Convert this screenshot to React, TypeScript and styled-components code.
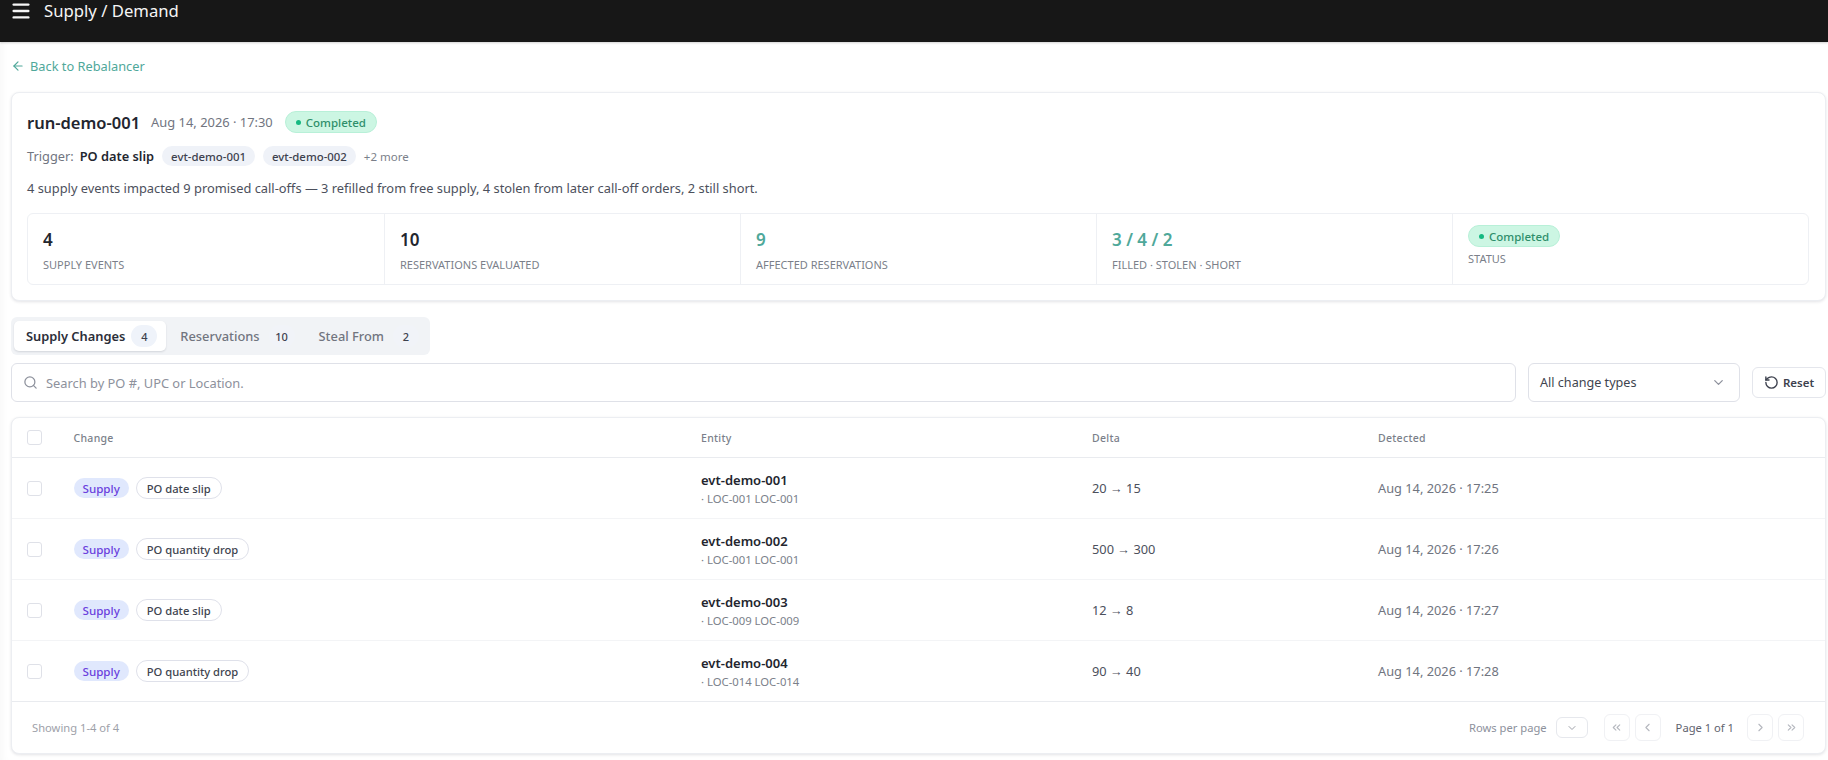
import styled, { createGlobalStyle } from "styled-components";
import {
  ArrowLeft,
  ChevronDown,
  ChevronLeft,
  ChevronRight,
  ChevronsLeft,
  ChevronsRight,
  Menu,
  RotateCcw,
  Search,
} from "lucide-react";

const GlobalStyle = createGlobalStyle`
  * { box-sizing: border-box; }
  html, body { margin: 0; padding: 0; background: #fff; }
  body {
    font-family: "Noto Sans", "Open Sans", sans-serif;
    color: #23262f;
    overflow: hidden;
  }
`;

const TopBar = styled.header`
  display: flex;
  align-items: flex-start;
  gap: 12px;
  height: 42px;
  padding: 0 0 0 10px;
  background: #171717;
  color: #f5f5f5;
  box-shadow: 0 1px 2px rgba(0, 0, 0, 0.18);
`;

const TopTitle = styled.div`
  font-size: 16.7px;
  line-height: 22px;
`;

const Main = styled.main`
  padding: 15px 2px 0 11px;
  box-shadow: inset 8px 0 8px -6px rgba(0, 0, 0, 0.035);
  height: 718px;
`;

const BackLink = styled.a`
  display: flex;
  align-items: center;
  gap: 5px;
  height: 18px;
  font-size: 12.8px;
  color: #4fa89a;
`;

const Card = styled.section`
  margin-top: 17px;
  padding: 17px 16px 15px 15px;
  border: 1px solid #eceef2;
  border-radius: 8px;
  background: #fff;
  box-shadow: 0 1px 3px rgba(30, 35, 60, 0.12);
`;

const TitleRow = styled.div`
  display: flex;
  align-items: center;
  height: 24px;
`;

const RunName = styled.h1`
  margin: 0 11px 0 0;
  font-size: 16.5px;
  font-weight: 600;
  color: #23262f;
`;

const RunDate = styled.span`
  margin-right: 12px;
  font-size: 12.9px;
  color: #71757f;
`;

const StatusPill = styled.span`
  display: inline-flex;
  align-items: center;
  gap: 5px;
  height: 22px;
  padding: 0 10px;
  border: 1px solid #b8f0d8;
  border-radius: 11px;
  background: #ccf6e3;
  color: #2f8f6b;
  font-size: 11.5px;
  font-weight: 500;
`;

const StatusDot = styled.i`
  width: 5px;
  height: 5px;
  border-radius: 50%;
  background: #15b981;
`;

const TriggerRow = styled.div`
  display: flex;
  align-items: center;
  height: 22px;
  margin-top: 11px;
  font-size: 12.8px;
`;

const TriggerLabel = styled.span`
  margin-right: 6px;
  color: #71757f;
`;

const TriggerValue = styled.strong`
  margin-right: 8px;
  font-weight: 600;
  color: #23262f;
`;

const EventChip = styled.span`
  display: inline-flex;
  align-items: center;
  height: 20px;
  margin-right: 8px;
  padding: 0 9px;
  border-radius: 10px;
  background: #eff2f8;
  color: #3d414e;
  font-size: 11.4px;
  font-weight: 500;
`;

const MoreLink = styled.span`
  color: #7b7f8a;
  font-size: 11.5px;
`;

const Summary = styled.p`
  margin: 11px 0 0;
  font-size: 12.85px;
  line-height: 20px;
  color: #4c505c;
`;

const StatGrid = styled.div`
  display: grid;
  grid-template-columns: repeat(5, 1fr);
  height: 72px;
  margin-top: 15px;
  border: 1px solid #eef0f4;
  border-radius: 6px;
`;

const StatCell = styled.div`
  display: flex;
  flex-direction: column;
  padding: 14px 16px 0 15px;
  border-left: 1px solid #eef0f4;

  &:first-child {
    border-left: 0;
  }
`;

const StatusCell = styled(StatCell)`
  padding-top: 11px;
  align-items: flex-start;
`;

const StatValue = styled.div<{ $accent?: boolean }>`
  height: 24px;
  font-size: 17px;
  line-height: 24px;
  font-weight: 600;
  color: ${({ $accent }) => ($accent ? "#4fa89a" : "#23262f")};
`;

const StatLabel = styled.div`
  margin-top: 5px;
  font-size: 11px;
  line-height: 16px;
  color: #7b7f8a;
`;

const StatusLabel = styled(StatLabel)`
  margin-top: 4px;
`;

const TabList = styled.div`
  display: inline-flex;
  height: 38px;
  margin-top: 16px;
  padding: 4px 1px 4px 3px;
  border-radius: 6px;
  background: #f1f3f6;
`;

const Tab = styled.div<{ $active?: boolean }>`
  display: flex;
  align-items: center;
  gap: ${({ $active }) => ($active ? "6px" : "9px")};
  padding: ${({ $active }) => ($active ? "0 9px 0 12px" : "0 10px 0 14px")};
  border-radius: 5px;
  font-size: 12.85px;
  font-weight: ${({ $active }) => ($active ? 600 : 500)};
  color: ${({ $active }) => ($active ? "#2b2e39" : "#71757f")};
  background: ${({ $active }) => ($active ? "#fff" : "transparent")};
  box-shadow: ${({ $active }) => ($active ? "0 1px 2px rgba(30, 35, 60, 0.14)" : "none")};
`;

const TabCount = styled.span<{ $active?: boolean }>`
  display: flex;
  align-items: center;
  justify-content: center;
  min-width: 26px;
  height: 22px;
  padding: 0 6px;
  border-radius: 11px;
  font-size: 11px;
  font-weight: 500;
  color: #3d414e;
  background: ${({ $active }) => ($active ? "#eff3fa" : "#f1f3f8")};
`;

const FilterRow = styled.div`
  display: flex;
  align-items: center;
  gap: 12px;
  height: 39px;
  margin-top: 8px;
`;

const SearchBox = styled.div`
  flex: 1;
  display: flex;
  align-items: center;
  gap: 8px;
  height: 39px;
  padding: 0 11px;
  border: 1px solid #dfe1e8;
  border-radius: 6px;
  color: #8d919c;
  font-size: 12.85px;
`;

const SelectBox = styled.div`
  display: flex;
  align-items: center;
  justify-content: space-between;
  width: 212px;
  height: 39px;
  padding: 0 13px 0 11px;
  border: 1px solid #dfe1e8;
  border-radius: 6px;
  color: #40444f;
  font-size: 12.6px;
`;

const ResetButton = styled.button`
  display: flex;
  align-items: center;
  justify-content: center;
  gap: 4px;
  width: 74px;
  height: 31px;
  padding: 0;
  border: 1px solid #e4e6ec;
  border-radius: 6px;
  background: #fff;
  color: #3d414e;
  font: 600 11.5px "Noto Sans", sans-serif;
`;

const TableCard = styled.section`
  margin-top: 15px;
  border: 1px solid #eceef2;
  border-radius: 8px;
  background: #fff;
  box-shadow: 0 1px 3px rgba(30, 35, 60, 0.12);
`;

const TableRow = styled.div<{ $head?: boolean }>`
  display: grid;
  grid-template-columns: 46.5px 627.5px 391px 286px 1fr;
  align-items: center;
  height: ${({ $head }) => ($head ? "40px" : "61px")};
  padding-left: 15px;
  border-bottom: 1px solid ${({ $head }) => ($head ? "#e9ebef" : "#f3f4f6")};

  &:last-of-type {
    border-bottom-color: #e9ebef;
  }
`;

const HeadCell = styled.div`
  font-size: 10.5px;
  font-weight: 500;
  letter-spacing: 0.3px;
  color: #7b7f8a;
`;

const Checkbox = styled.span`
  display: block;
  width: 15px;
  height: 15px;
  border: 1px solid #dfe1e8;
  border-radius: 3px;
  background: #fff;
`;

const ChangeCell = styled.div`
  display: flex;
  align-items: center;
  gap: 7px;
`;

const KindPill = styled.span`
  display: inline-flex;
  align-items: center;
  height: 20px;
  padding: 0 9px;
  border-radius: 10px;
  background: #e0e8fd;
  color: #6b3fdd;
  font-size: 11.6px;
  font-weight: 500;
`;

const ReasonPill = styled.span`
  display: inline-flex;
  align-items: center;
  height: 22px;
  padding: 0 10px;
  border: 1px solid #dfe1ea;
  border-radius: 11px;
  color: #40444f;
  font-size: 11.2px;
  font-weight: 500;
`;

const EntityName = styled.div`
  font-size: 13px;
  line-height: 18px;
  font-weight: 600;
  color: #23262f;
`;

const EntitySub = styled.div`
  margin-top: 2px;
  font-size: 11.3px;
  line-height: 15px;
  color: #7b7f8a;
`;

const DeltaCell = styled.div`
  font-size: 12.8px;
  color: #4c505c;
`;

const DetectedCell = styled.div`
  font-size: 12.8px;
  color: #71757f;
`;

const TableFooter = styled.footer`
  display: flex;
  align-items: center;
  justify-content: space-between;
  height: 51px;
  padding: 0 21px 0 20px;
`;

const ShowingText = styled.span`
  font-size: 11.2px;
  color: #9ea1a9;
`;

const Pager = styled.div`
  display: flex;
  align-items: center;
  color: #8d919c;
  font-size: 11.2px;
`;

const RowsSelect = styled.span`
  display: flex;
  align-items: center;
  justify-content: center;
  width: 32px;
  height: 21px;
  margin: 0 16px 0 9px;
  border: 1px solid #e6e8ed;
  border-radius: 6px;
  color: #9ea1a9;
`;

const PageButton = styled.span`
  display: flex;
  align-items: center;
  justify-content: center;
  width: 26px;
  height: 27px;
  margin-right: 5px;
  border: 1px solid #f0f1f4;
  border-radius: 6px;
  color: #b4b7be;

  &:last-child {
    margin-right: 0;
  }
`;

const PageLabel = styled.span`
  margin: 0 13px 0 10px;
  color: #5f636e;
  font-size: 11.2px;
`;

const rows = [
  { reason: "PO date slip", id: "evt-demo-001", loc: "LOC-001 LOC-001", delta: "20 → 15", at: "17:25" },
  { reason: "PO quantity drop", id: "evt-demo-002", loc: "LOC-001 LOC-001", delta: "500 → 300", at: "17:26" },
  { reason: "PO date slip", id: "evt-demo-003", loc: "LOC-009 LOC-009", delta: "12 → 8", at: "17:27" },
  { reason: "PO quantity drop", id: "evt-demo-004", loc: "LOC-014 LOC-014", delta: "90 → 40", at: "17:28" },
];

const Completed = () => (
  <StatusPill>
    <StatusDot />
    Completed
  </StatusPill>
);

const App = () => (
  <>
    <GlobalStyle />
    <TopBar>
      <Menu size={22} strokeWidth={2.6} />
      <TopTitle>Supply / Demand</TopTitle>
    </TopBar>
    <Main>
      <BackLink>
        <ArrowLeft size={14} />
        Back to Rebalancer
      </BackLink>

      <Card>
        <TitleRow>
          <RunName>run-demo-001</RunName>
          <RunDate>Aug 14, 2026 · 17:30</RunDate>
          <Completed />
        </TitleRow>
        <TriggerRow>
          <TriggerLabel>Trigger:</TriggerLabel>
          <TriggerValue>PO date slip</TriggerValue>
          <EventChip>evt-demo-001</EventChip>
          <EventChip>evt-demo-002</EventChip>
          <MoreLink>+2 more</MoreLink>
        </TriggerRow>
        <Summary>
          4 supply events impacted 9 promised call-offs — 3 refilled from free supply, 4 stolen from later call-off orders, 2 still short.
        </Summary>
        <StatGrid>
          <StatCell>
            <StatValue>4</StatValue>
            <StatLabel>SUPPLY EVENTS</StatLabel>
          </StatCell>
          <StatCell>
            <StatValue>10</StatValue>
            <StatLabel>RESERVATIONS EVALUATED</StatLabel>
          </StatCell>
          <StatCell>
            <StatValue $accent>9</StatValue>
            <StatLabel>AFFECTED RESERVATIONS</StatLabel>
          </StatCell>
          <StatCell>
            <StatValue $accent>3 / 4 / 2</StatValue>
            <StatLabel>FILLED · STOLEN · SHORT</StatLabel>
          </StatCell>
          <StatusCell>
            <Completed />
            <StatusLabel>STATUS</StatusLabel>
          </StatusCell>
        </StatGrid>
      </Card>

      <TabList>
        <Tab $active>
          Supply Changes <TabCount $active>4</TabCount>
        </Tab>
        <Tab>
          Reservations <TabCount>10</TabCount>
        </Tab>
        <Tab>
          Steal From <TabCount>2</TabCount>
        </Tab>
      </TabList>

      <FilterRow>
        <SearchBox>
          <Search size={15} />
          Search by PO #, UPC or Location.
        </SearchBox>
        <SelectBox>
          All change types
          <ChevronDown size={15} color="#8d919c" />
        </SelectBox>
        <ResetButton>
          <RotateCcw size={15} strokeWidth={2.2} />
          Reset
        </ResetButton>
      </FilterRow>

      <TableCard>
        <TableRow $head>
          <Checkbox />
          <HeadCell>Change</HeadCell>
          <HeadCell>Entity</HeadCell>
          <HeadCell>Delta</HeadCell>
          <HeadCell>Detected</HeadCell>
        </TableRow>
        {rows.map((row) => (
          <TableRow key={row.id}>
            <Checkbox />
            <ChangeCell>
              <KindPill>Supply</KindPill>
              <ReasonPill>{row.reason}</ReasonPill>
            </ChangeCell>
            <div>
              <EntityName>{row.id}</EntityName>
              <EntitySub>· {row.loc}</EntitySub>
            </div>
            <DeltaCell>{row.delta}</DeltaCell>
            <DetectedCell>Aug 14, 2026 · {row.at}</DetectedCell>
          </TableRow>
        ))}
        <TableFooter>
          <ShowingText>Showing 1-4 of 4</ShowingText>
          <Pager>
            Rows per page
            <RowsSelect>
              <ChevronDown size={12} />
            </RowsSelect>
            <PageButton>
              <ChevronsLeft size={13} />
            </PageButton>
            <PageButton>
              <ChevronLeft size={13} />
            </PageButton>
            <PageLabel>Page 1 of 1</PageLabel>
            <PageButton>
              <ChevronRight size={13} />
            </PageButton>
            <PageButton>
              <ChevronsRight size={13} />
            </PageButton>
          </Pager>
        </TableFooter>
      </TableCard>
    </Main>
  </>
);

export default App;
